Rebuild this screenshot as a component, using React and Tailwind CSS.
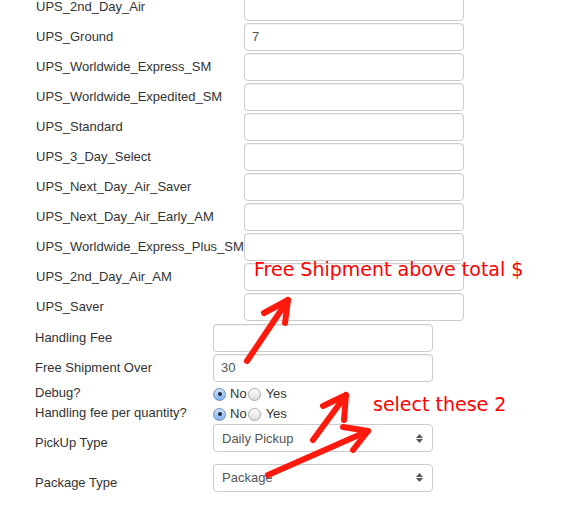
import React from 'react'

const upsRows = [
  ['UPS_2nd_Day_Air', ''],
  ['UPS_Ground', '7'],
  ['UPS_Worldwide_Express_SM', ''],
  ['UPS_Worldwide_Expedited_SM', ''],
  ['UPS_Standard', ''],
  ['UPS_3_Day_Select', ''],
  ['UPS_Next_Day_Air_Saver', ''],
  ['UPS_Next_Day_Air_Early_AM', ''],
  ['UPS_Worldwide_Express_Plus_SM', ''],
  ['UPS_2nd_Day_Air_AM', ''],
  ['UPS_Saver', ''],
]

function Field({ value, className = '' }) {
  return (
    <div className={`h-[28px] w-[220px] rounded-[4px] border border-[#cccccc] bg-white px-[7px] flex items-center text-[13px] text-[#555] shadow-[inset_0_1px_1px_rgba(0,0,0,0.06)] ${className}`}>
      {value}
    </div>
  )
}

function Radio({ checked }) {
  return checked ? (
    <span className="w-[13px] h-[13px] rounded-full border border-[#6f8fb8] bg-gradient-to-b from-[#cfe3fb] to-[#7fb0ea] flex items-center justify-center shrink-0">
      <span className="w-[4px] h-[4px] rounded-full bg-[#1d2c40]" />
    </span>
  ) : (
    <span className="block w-[13px] h-[13px] rounded-full border border-[#a8a8a8] bg-gradient-to-b from-[#ffffff] to-[#dcdcdc] shrink-0" />
  )
}

function RadioPair() {
  return (
    <div className="flex items-center text-[13px] text-[#333]">
      <Radio checked />
      <span className="ml-[4px]">No</span>
      <span className="ml-[1px]"><Radio /></span>
      <span className="ml-[5px]">Yes</span>
    </div>
  )
}

function Select({ value }) {
  return (
    <div className="h-[28px] w-[220px] rounded-[4px] border border-[#cccccc] bg-white pl-[8px] pr-[9px] flex items-center justify-between text-[13px] text-[#555]">
      <span>{value}</span>
      <span className="flex flex-col items-center gap-[1px]">
        <svg width="7" height="4" viewBox="0 0 7 4"><path d="M0 4 L3.5 0 L7 4 Z" fill="#555" /></svg>
        <svg width="7" height="4" viewBox="0 0 7 4"><path d="M0 0 L3.5 4 L7 0 Z" fill="#555" /></svg>
      </span>
    </div>
  )
}

export default function App() {
  return (
    <div className="relative w-[571px] h-[512px] overflow-hidden bg-white text-[#333] text-[13px]" style={{ fontFamily: '"Liberation Sans", Arial, sans-serif' }}>
      <div className="-mt-[7px] pl-[36px] flex flex-col gap-[2px]">
        {upsRows.map(([label, value]) => (
          <div key={label} className="flex items-center">
            <div className="w-[208px] whitespace-nowrap">{label}</div>
            <Field value={value} />
          </div>
        ))}
      </div>

      <div className="mt-[3px] pl-[35px] flex flex-col">
        <div className="flex items-center mb-[2px]">
          <div className="w-[178px]">Handling Fee</div>
          <Field value="" className="w-[219px]" />
        </div>
        <div className="flex items-center">
          <div className="w-[178px]">Free Shipment Over</div>
          <Field value="30" className="w-[219px]" />
        </div>
        <div className="flex items-center h-[20px] mt-[2px]">
          <div className="w-[178px] -mt-[3px]">Debug?</div>
          <RadioPair />
        </div>
        <div className="flex items-center h-[20px]">
          <div className="w-[178px] -mt-[2px]">Handling fee per quantity?</div>
          <RadioPair />
        </div>
        <div className="flex items-center">
          <div className="w-[178px] mt-[9px]">PickUp Type</div>
          <Select value="Daily Pickup" />
        </div>
        <div className="flex items-center mt-[11px]">
          <div className="w-[178px] mt-[9px]">Package Type</div>
          <Select value="Package" />
        </div>
      </div>

      <div className="absolute left-[254px] top-[260px] text-[19px] leading-[19px] text-[#ff0000] whitespace-nowrap" style={{ fontFamily: '"DejaVu Sans", Verdana, sans-serif' }}>
        Free Shipment above total $
      </div>
      <div className="absolute left-[373px] top-[395px] text-[19px] leading-[19px] text-[#ff0000] whitespace-nowrap" style={{ fontFamily: '"DejaVu Sans", Verdana, sans-serif' }}>
        select these 2
      </div>

      <svg className="absolute inset-0 pointer-events-none" width="571" height="512" viewBox="0 0 571 512">
        <g stroke="#ff1a0d" strokeWidth="6" strokeLinecap="round" strokeLinejoin="round" fill="none">
          <line x1="247" y1="361" x2="288" y2="300" />
          <polyline points="264,313 288,300 285,323" />
          <line x1="313" y1="440" x2="346" y2="395" />
          <polyline points="323,406 346,395 344,420" />
          <line x1="268" y1="475" x2="368" y2="431" />
          <polyline points="343,427 368,431 353,450" />
        </g>
      </svg>
    </div>
  )
}
